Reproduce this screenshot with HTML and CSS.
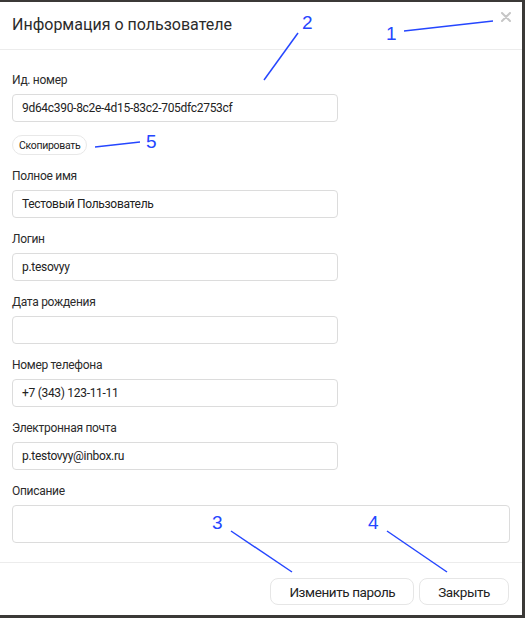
FILE: index.html
```html
<!DOCTYPE html>
<html lang="ru">
<head>
<meta charset="utf-8">
<title>Информация о пользователе</title>
<link rel="stylesheet" href="styles.css">
</head>
<body>
<div class="modal">
  <div class="header">
    <h1 class="title">Информация о пользователе</h1>
    <button class="close" aria-label="Закрыть">
      <svg width="10" height="10" viewBox="0 0 10 10"><path d="M1 1 L9 9 M9 1 L1 9" stroke="#c6c6c6" stroke-width="2" stroke-linecap="round"/></svg>
    </button>
  </div>
  <div class="content">
    <div class="field">
      <label class="label">Ид. номер</label>
      <div class="input">9d64c390-8c2e-4d15-83c2-705dfc2753cf</div>
    </div>
    <button class="copy">Скопировать</button>
    <div class="field">
      <label class="label">Полное имя</label>
      <div class="input">Тестовый Пользователь</div>
    </div>
    <div class="field">
      <label class="label">Логин</label>
      <div class="input">p.tesovyy</div>
    </div>
    <div class="field">
      <label class="label">Дата рождения</label>
      <div class="input"></div>
    </div>
    <div class="field">
      <label class="label">Номер телефона</label>
      <div class="input">+7 (343) 123-11-11</div>
    </div>
    <div class="field">
      <label class="label">Электронная почта</label>
      <div class="input">p.testovyy@inbox.ru</div>
    </div>
    <div class="field last">
      <label class="label">Описание</label>
      <div class="textarea"></div>
    </div>
  </div>
  <div class="footer">
    <button class="btn">Изменить пароль</button>
    <button class="btn">Закрыть</button>
  </div>
</div>
<svg class="annotations" width="525" height="618" viewBox="0 0 525 618">
  <g stroke="#2546ff" stroke-width="1.5" fill="none">
    <line x1="404" y1="31" x2="493" y2="21"/>
    <line x1="264" y1="80" x2="298" y2="33"/>
    <line x1="231" y1="531" x2="292" y2="572"/>
    <line x1="387" y1="531" x2="447" y2="572"/>
    <line x1="95" y1="147" x2="140" y2="142"/>
  </g>
  <g class="nums" fill="#2546ff">
    <text x="386" y="40">1</text>
    <text x="302" y="29">2</text>
    <text x="212" y="529">3</text>
    <text x="368" y="529">4</text>
    <text x="146" y="148">5</text>
  </g>
</svg>
</body>
</html>
```
FILE: styles.css
```css
html {
  background: #3b3937;
}
body {
  margin: 0;
  width: 525px;
  height: 618px;
  position: relative;
  font-family: Roboto, "Noto Sans", sans-serif;
  color: #222;
}
.modal {
  margin-top: 2px;
  width: 522px;
  height: 613px;
  background: #fff;
  display: flex;
  flex-direction: column;
  box-sizing: border-box;
}
.header {
  height: 48px;
  box-sizing: border-box;
  border-bottom: 1px solid #ececec;
  display: flex;
  align-items: center;
  justify-content: space-between;
  padding: 0 10px 0 12px;
}
.title {
  margin: 0;
  font-size: 16px;
  font-weight: 400;
  color: #2b2b2b;
  line-height: 24px;
  margin-top: -2px;
}
.close {
  border: 0;
  background: none;
  padding: 0;
  width: 12px;
  height: 12px;
  display: flex;
  align-items: center;
  justify-content: center;
  margin-top: -17px;
}
.content {
  flex: 1;
  padding: 22px 12px 0;
  display: flex;
  flex-direction: column;
}
.field {
  display: flex;
  flex-direction: column;
  gap: 6px;
  margin-bottom: 13px;
}
.label {
  font-size: 12px;
  letter-spacing: -0.3px;
  line-height: 16px;
  color: #2b2b2b;
}
.input {
  width: 326px;
  height: 28px;
  box-sizing: border-box;
  border: 1px solid #dcdcdc;
  border-radius: 4px;
  padding: 0 9px;
  font-size: 12px;
  letter-spacing: -0.3px;
  line-height: 26px;
  color: #222;
}
.textarea {
  width: 498px;
  height: 38px;
  box-sizing: border-box;
  border: 1px solid #dcdcdc;
  border-radius: 4px;
}
.copy {
  align-self: flex-start;
  margin: 0 0 13px;
  height: 20px;
  padding: 0 6px;
  border: 1px solid #e8e8e8;
  border-radius: 10px;
  background: #fff;
  font-family: inherit;
  font-size: 10.5px;
  letter-spacing: -0.3px;
  color: #222;
}
.footer {
  border-top: 1px solid #ececec;
  height: 53px;
  box-sizing: border-box;
  display: flex;
  justify-content: flex-end;
  align-items: flex-start;
  gap: 5px;
  padding: 15px 13px 0;
}
.btn {
  height: 27px;
  padding: 0 18px;
  border: 1px solid #e6e6e6;
  border-radius: 8px;
  background: #fff;
  font-family: inherit;
  font-size: 13.5px;
  letter-spacing: -0.4px;
  color: #222;
}
.annotations {
  position: absolute;
  top: 0;
  left: 0;
  pointer-events: none;
}
.nums text {
  font-family: "Liberation Sans", Arial, sans-serif;
  font-size: 19px;
}
```
